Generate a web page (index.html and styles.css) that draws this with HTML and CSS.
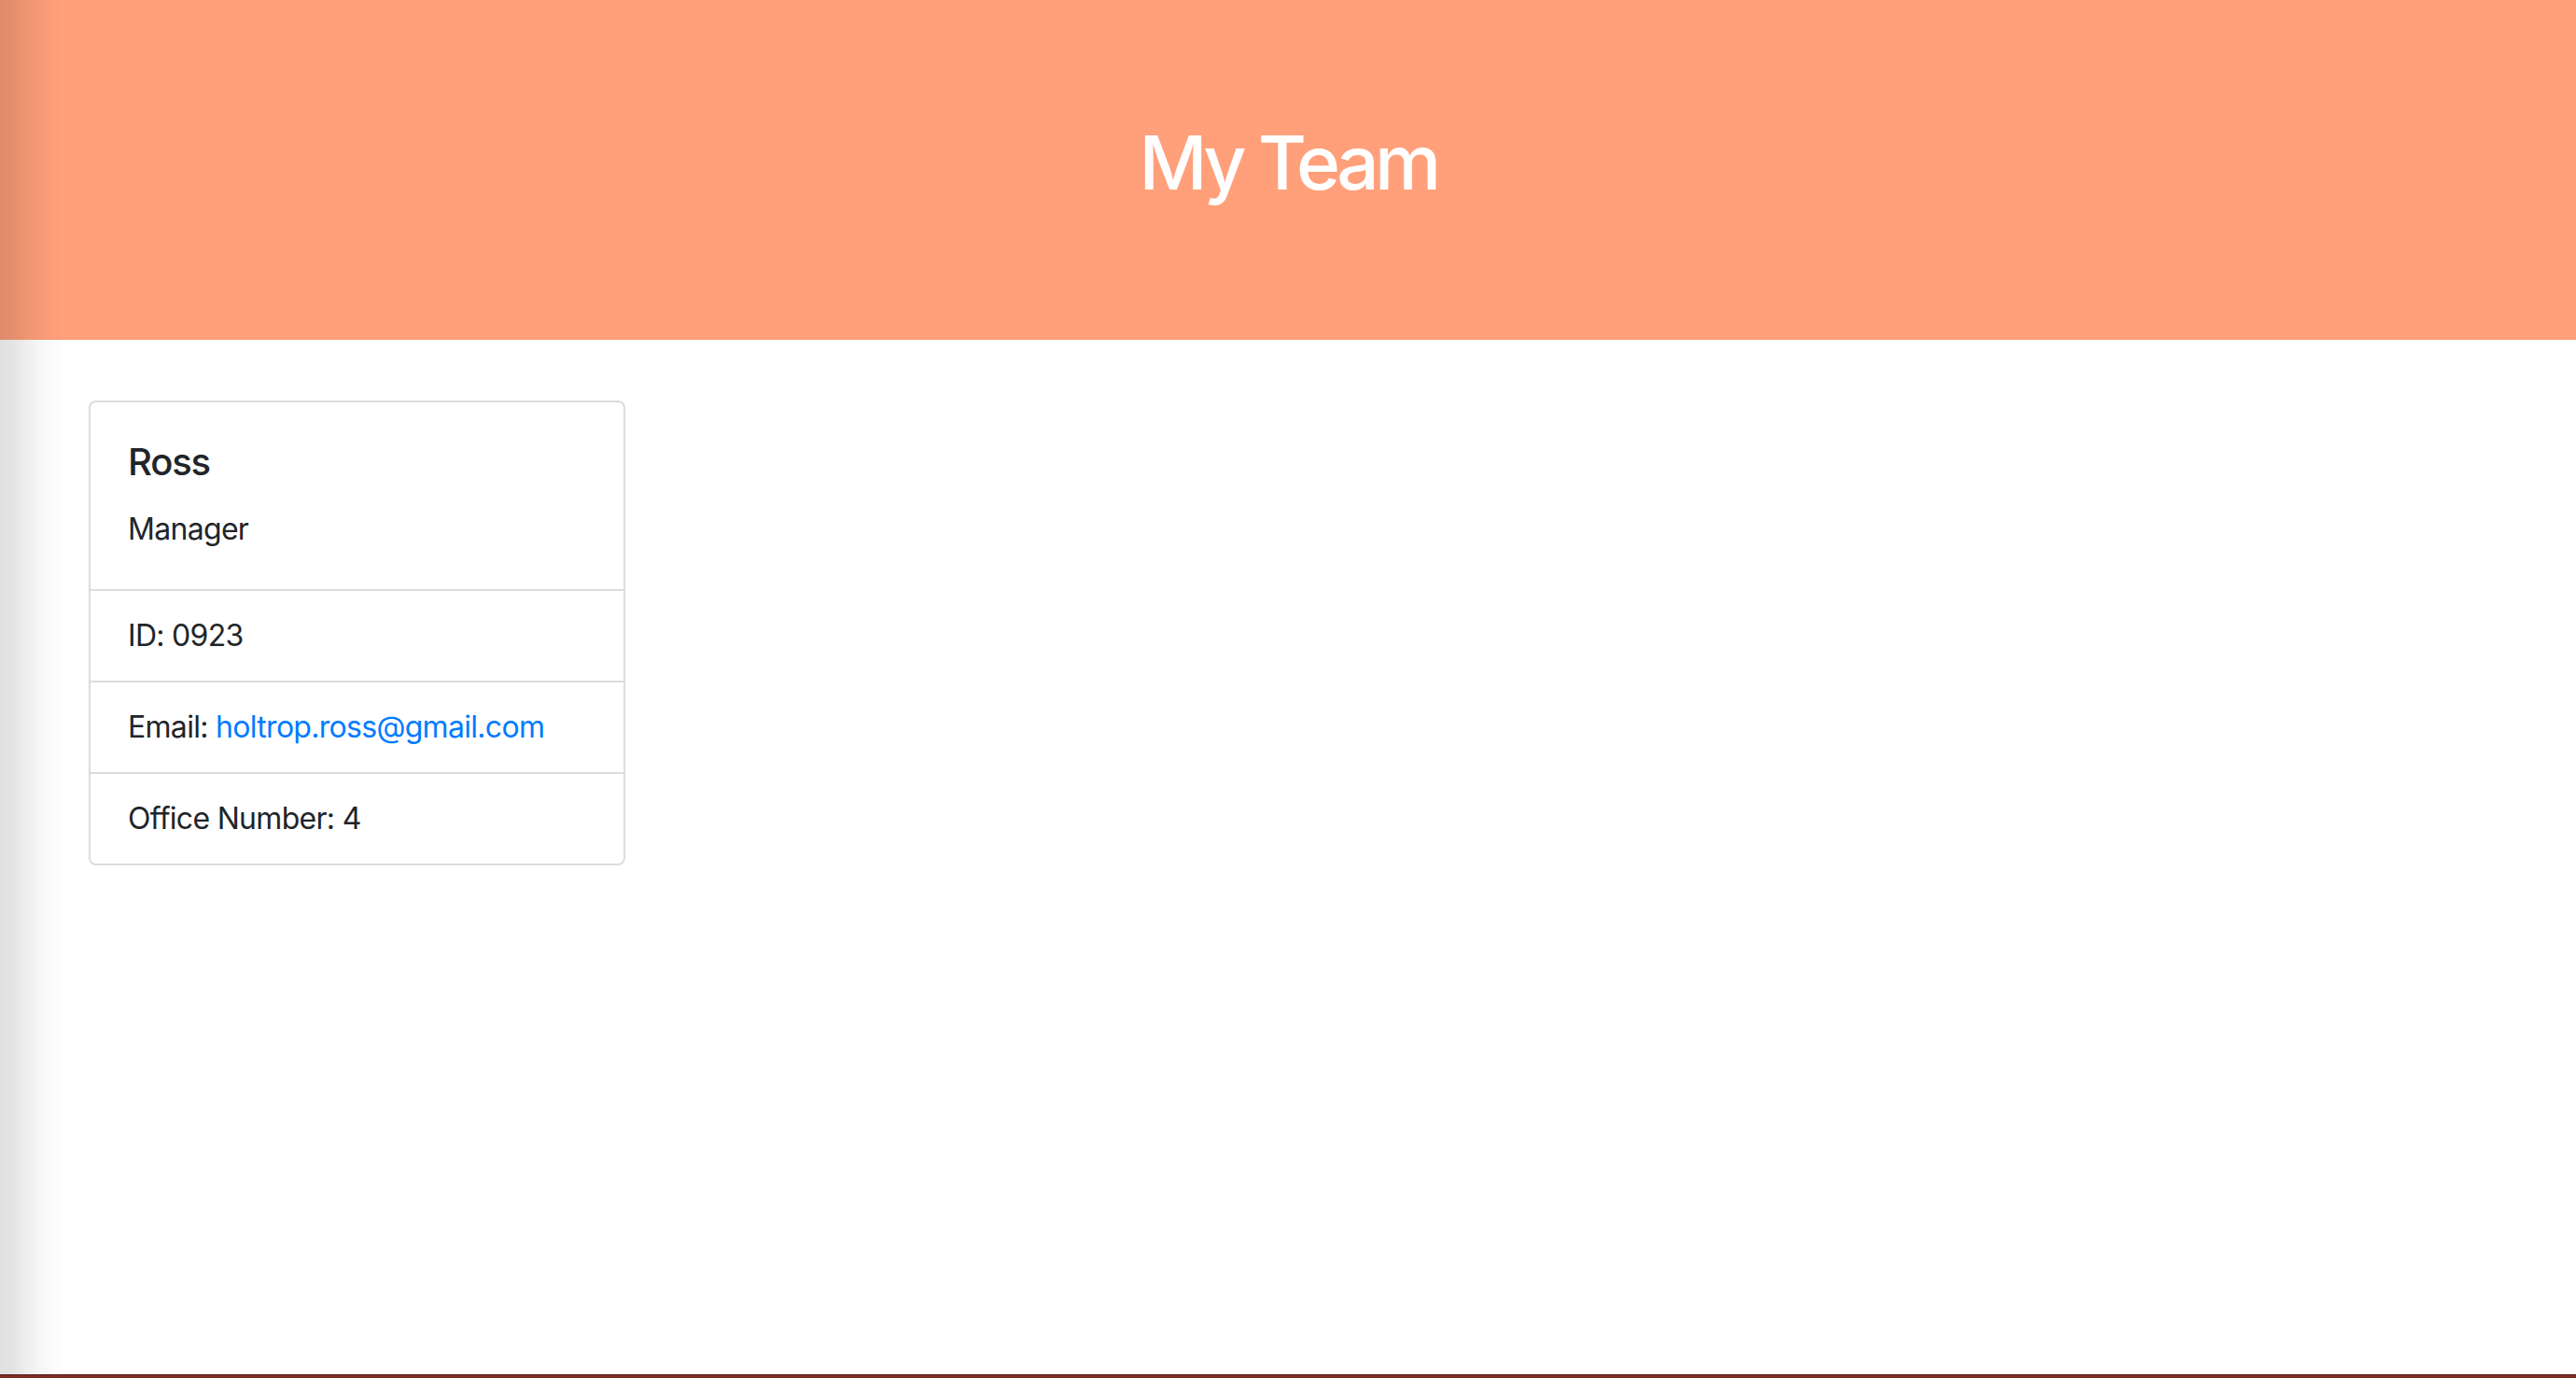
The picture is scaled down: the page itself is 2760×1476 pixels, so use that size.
FILE: index.html
```html
<!DOCTYPE html>
<html lang="en">
<head>
<meta charset="utf-8">
<title>My Team</title>
<link rel="stylesheet" href="styles.css">
</head>
<body>
<div class="page">
  <header class="hero">
    <h1 class="hero-title">My Team</h1>
  </header>
  <main class="team">
    <div class="card">
      <div class="card-body">
        <h5 class="card-title">Ross</h5>
        <p class="card-text">Manager</p>
      </div>
      <ul class="list-group">
        <li class="list-item">ID: 0923</li>
        <li class="list-item">Email: <a class="link" href="mailto:holtrop.ross@gmail.com">holtrop.ross@gmail.com</a></li>
        <li class="list-item">Office Number: 4</li>
      </ul>
    </div>
  </main>
  <div class="bottom-bar"></div>
</div>
<div class="edge-shadow"></div>
</body>
</html>
```
FILE: styles.css
```css
* { box-sizing: border-box; }
html, body { margin: 0; padding: 0; }
body {
  font-family: Inter, "Noto Sans", "Liberation Sans", sans-serif;
  color: #212529;
  background: #fff;
  font-size: 32px;
  line-height: 48px;
  letter-spacing: -0.7px;
}
.page {
  display: flex;
  flex-direction: column;
  height: 100vh;
}
.hero {
  background: #ffa07b;
  height: 364px;
  flex: 0 0 auto;
  display: flex;
  justify-content: center;
  padding-top: 126px;
}
.hero-title {
  margin: 0;
  color: #fff;
  font-size: 80px;
  font-weight: 500;
  line-height: 96px;
  letter-spacing: -4.6px;
}
.team {
  flex: 1 1 auto;
  padding: 65px 0 0 95px;
}
.card {
  width: 575px;
  border: 2px solid #dcdcdc;
  border-radius: 8px;
  background: #fff;
}
.card-body {
  padding: 40px;
}
.card-title {
  margin: 0 0 24px;
  font-size: 40px;
  line-height: 48px;
  font-weight: 500;
  letter-spacing: -1.2px;
}
.card-text {
  margin: 0;
}
.list-group {
  list-style: none;
  margin: 0;
  padding: 0;
}
.list-item {
  border-top: 2px solid #dcdcdc;
  padding: 24px 40px;
}
.link {
  color: #007bff;
  text-decoration: none;
}
.bottom-bar {
  flex: 0 0 4px;
  background: #7b2e23;
  border-top: 1px solid #5a1c15;
}
.edge-shadow {
  position: fixed;
  left: 0;
  top: 0;
  bottom: 4px;
  width: 68px;
  pointer-events: none;
  background: linear-gradient(to right, rgba(0,0,0,0.12) 0, rgba(0,0,0,0.11) 12px, rgba(0,0,0,0.04) 40px, rgba(0,0,0,0) 68px);
}
```
